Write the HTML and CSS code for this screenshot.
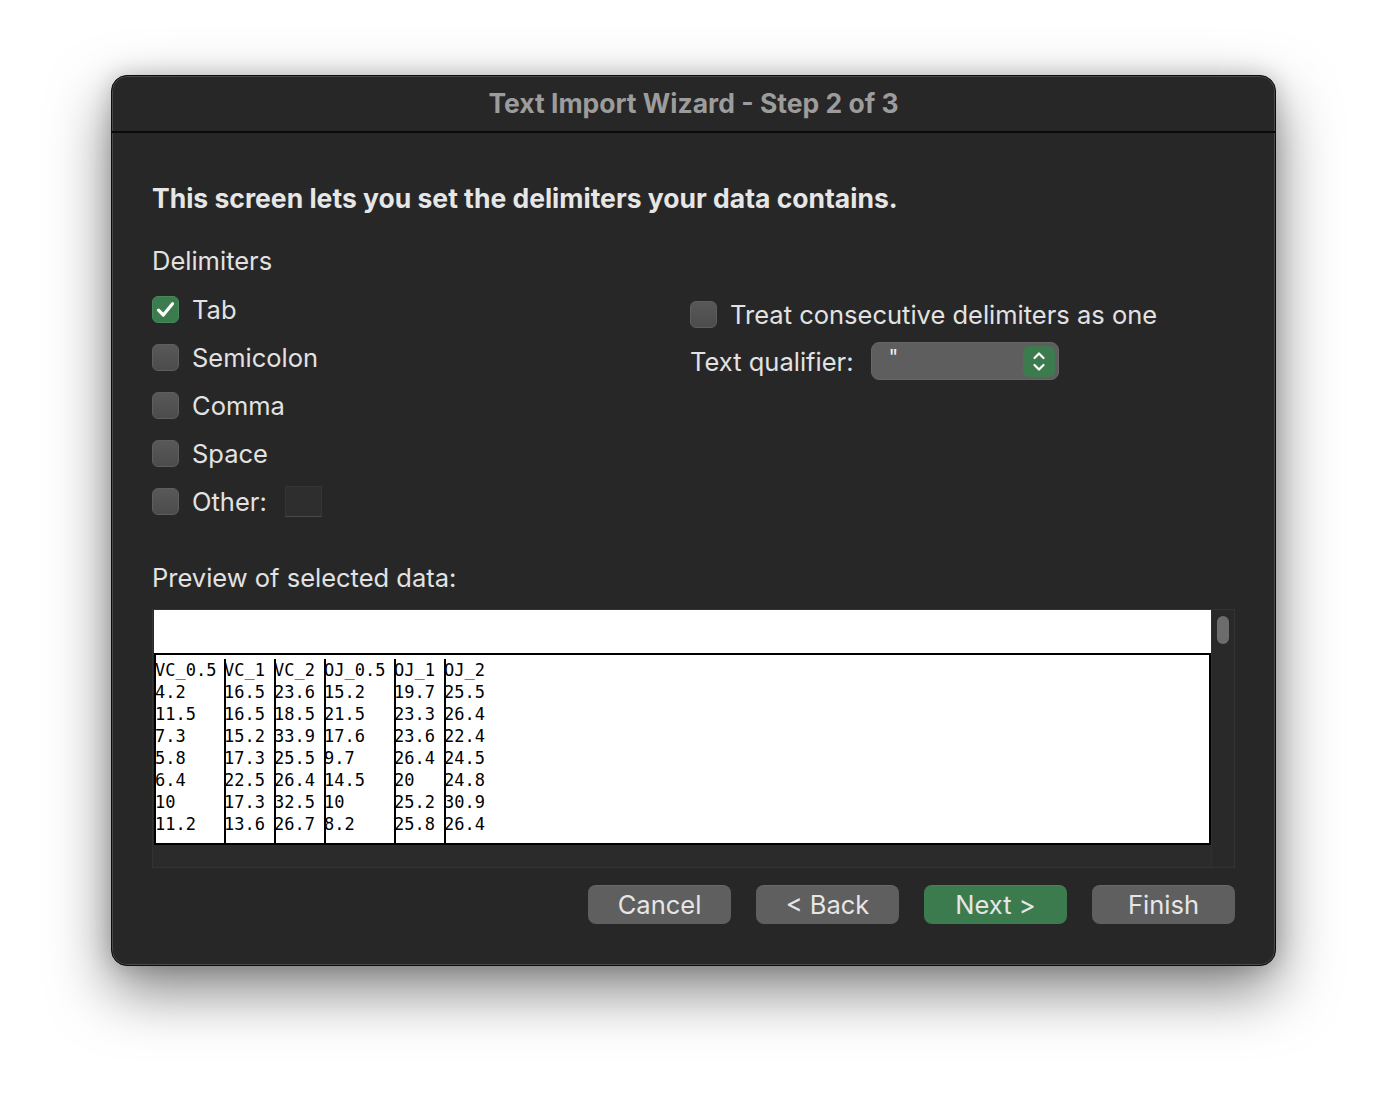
FILE: index.html
```html
<!DOCTYPE html>
<html>
<head>
<meta charset="utf-8">
<link rel="stylesheet" href="styles.css">
</head>
<body>
<div class="window">
  <div class="titlebar">Text Import Wizard - Step 2 of 3</div>
  <div class="content">
    <h1 class="heading">This screen lets you set the delimiters your data contains.</h1>
    <div class="section-label">Delimiters</div>
    <div class="options">
      <div class="col-left">
        <div class="opt"><span class="cb checked"><svg viewBox="0 0 27 27" width="27" height="27"><path d="M6.5 14.2 L11.3 19 L20.5 7.8" fill="none" stroke="#fff" stroke-width="3.2" stroke-linecap="round" stroke-linejoin="round"/></svg></span><span>Tab</span></div>
        <div class="opt"><span class="cb"></span><span>Semicolon</span></div>
        <div class="opt"><span class="cb"></span><span>Comma</span></div>
        <div class="opt"><span class="cb"></span><span>Space</span></div>
        <div class="opt"><span class="cb"></span><span>Other:</span><span class="other-field"></span></div>
      </div>
      <div class="col-right">
        <div class="opt opt-r"><span class="cb"></span><span>Treat consecutive delimiters as one</span></div>
        <div class="qual-row">
          <span>Text qualifier:</span>
          <div class="popup">
            <span class="popup-val">"</span>
            <span class="stepper"><svg viewBox="0 0 32 31" width="32" height="31"><path d="M11.5 12 L16 7.5 L20.5 12" fill="none" stroke="#fff" stroke-width="2.2" stroke-linecap="round" stroke-linejoin="round"/><path d="M11.5 19 L16 23.5 L20.5 19" fill="none" stroke="#fff" stroke-width="2.2" stroke-linecap="round" stroke-linejoin="round"/></svg></span>
          </div>
        </div>
      </div>
    </div>
    <div class="section-label preview-label">Preview of selected data:</div>
    <div class="preview">
      <div class="preview-main">
        <div class="preview-head"></div>
        <div class="table">
          <div class="tcol w7"><div class="cell">VC_0.5<br>4.2<br>11.5<br>7.3<br>5.8<br>6.4<br>10<br>11.2</div></div>
          <div class="tcol w5"><div class="cell">VC_1<br>16.5<br>16.5<br>15.2<br>17.3<br>22.5<br>17.3<br>13.6</div></div>
          <div class="tcol w5"><div class="cell">VC_2<br>23.6<br>18.5<br>33.9<br>25.5<br>26.4<br>32.5<br>26.7</div></div>
          <div class="tcol w7"><div class="cell">OJ_0.5<br>15.2<br>21.5<br>17.6<br>9.7<br>14.5<br>10<br>8.2</div></div>
          <div class="tcol w5"><div class="cell">OJ_1<br>19.7<br>23.3<br>23.6<br>26.4<br>20<br>25.2<br>25.8</div></div>
          <div class="tcol last"><div class="cell">OJ_2<br>25.5<br>26.4<br>22.4<br>24.5<br>24.8<br>30.9<br>26.4</div></div>
        </div>
        <div class="hscroll"></div>
      </div>
      <div class="vscroll"><div class="thumb"></div></div>
    </div>
    <div class="buttons">
      <button class="btn">Cancel</button>
      <button class="btn">&lt; Back</button>
      <button class="btn primary">Next &gt;</button>
      <button class="btn">Finish</button>
    </div>
  </div>
</div>
</body>
</html>
```
FILE: styles.css
```css
html, body {
  margin: 0;
  padding: 0;
  background: #ffffff;
}
body {
  padding: 75px 0 0 111px;
  min-height: 1114px;
  box-sizing: border-box;
  font-family: Inter, "Noto Sans", sans-serif;
  color: #e2e2e2;
}
.window {
  width: 1165px;
  height: 891px;
  box-sizing: border-box;
  background: #272727;
  border: 1px solid #0c0c0c;
  border-radius: 16px;
  box-shadow: inset 0 0 0 1px #4a4a4a, 0 24px 60px rgba(0,0,0,0.5), 0 0 22px rgba(0,0,0,0.18);
  display: flex;
  flex-direction: column;
  overflow: hidden;
}
.titlebar {
  height: 57px;
  flex: none;
  border-bottom: 2px solid #0a0a0a;
  box-sizing: border-box;
  display: flex;
  align-items: center;
  justify-content: center;
  color: #9c9c9c;
  font-weight: 700;
  font-size: 26.5px;
  padding-bottom: 2px;
}
.content {
  padding: 0 40px 0 40px;
  display: flex;
  flex-direction: column;
}
.heading {
  margin: 50px 0 0 0;
  font-size: 26.5px;
  line-height: 30px;
  font-weight: 700;
  color: #e6e6e6;
}
.section-label {
  margin-top: 33px;
  font-size: 25.5px;
  line-height: 30px;
}
.options {
  display: flex;
  margin-top: 9px;
}
.col-left {
  width: 538px;
  display: flex;
  flex-direction: column;
}
.col-right {
  display: flex;
  flex-direction: column;
  padding-top: 10px;
}
.opt {
  height: 48px;
  display: flex;
  align-items: center;
  font-size: 25.5px;
}
.opt-r {
  height: 38px;
}
.cb {
  width: 27px;
  height: 27px;
  box-sizing: border-box;
  border-radius: 6px;
  background: linear-gradient(#585858, #4c4c4c);
  border: 1px solid #5e5e5e;
  margin-right: 13px;
  flex: none;
  display: flex;
}
.cb.checked {
  background: #3b7b4e;
  border: 1px solid #46885a;
}
.cb.checked svg {
  margin: -1px;
}
.other-field {
  width: 37px;
  height: 31px;
  box-sizing: border-box;
  background: #2e2e2e;
  border: 1px solid #353535;
  border-bottom: 1px solid #4a4a4a;
  margin-left: 18px;
}
.qual-row {
  display: flex;
  align-items: center;
  margin-top: 9px;
  font-size: 25.5px;
}
.popup {
  margin-left: 18px;
  width: 188px;
  height: 38px;
  box-sizing: border-box;
  background: #5e5e5e;
  border: 1px solid #666;
  border-radius: 8px;
  display: flex;
  align-items: center;
  justify-content: space-between;
  padding: 0 3px 0 16px;
}
.popup-val {
  font-size: 21px;
  align-self: flex-start;
  margin-top: 2px;
  color: #eee;
}
.stepper {
  width: 32px;
  height: 31px;
  border-radius: 6px;
  background: #3b7b4e;
  display: flex;
}
.preview-label {
  margin-top: 38px;
}
.preview {
  margin-top: 16px;
  width: 1083px;
  height: 259px;
  box-sizing: border-box;
  border: 1px solid #333;
  display: flex;
  background: #2a2a2a;
}
.preview-main {
  flex: 1;
  display: flex;
  flex-direction: column;
  padding-left: 1px;
}
.preview-head {
  height: 43px;
  background: #fff;
}
.table {
  height: 192px;
  box-sizing: border-box;
  background: #fff;
  border: 2px solid #000;
  display: flex;
  font-family: "DejaVu Sans Mono", "Liberation Mono", monospace;
  font-size: 17px;
  line-height: 22px;
  color: #000;
  padding-top: 4px;
}
.tcol {
  border-right: 2px solid #000;
  white-space: nowrap;
  flex: none;
}
.cell {
  margin-left: -2px;
}
.tcol:first-child .cell {
  margin-left: -1px;
}
.tcol.w7 { width: 68px; }
.tcol.w5 { width: 48px; }
.tcol.last { border-right: none; flex: 1; }
.hscroll {
  flex: 1;
  background: #2b2b2b;
}
.vscroll {
  width: 22px;
  flex: none;
  background: #292929;
  border-left: 1px solid #303030;
  display: flex;
  justify-content: center;
  padding-top: 6px;
}
.thumb {
  width: 12px;
  height: 28px;
  border-radius: 6px;
  background: #6c6c6c;
}
.buttons {
  display: flex;
  justify-content: flex-end;
  gap: 25px;
  margin-top: 17px;
  width: 1083px;
}
.btn {
  width: 143px;
  height: 39px;
  border: none;
  border-radius: 8px;
  background: #5f5f5f;
  color: #e6e6e6;
  font-family: Inter, "Noto Sans", sans-serif;
  font-size: 25.5px;
  padding: 0;
  box-shadow: inset 0 1px 0 rgba(255,255,255,0.06);
}
.btn.primary {
  background: #3b7b4e;
}
```
